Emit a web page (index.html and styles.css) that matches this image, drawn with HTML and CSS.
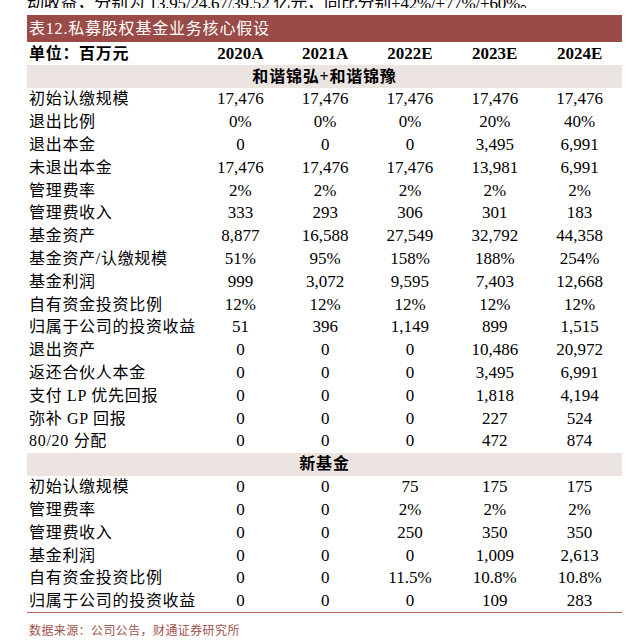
FILE: index.html
```html
<!DOCTYPE html>
<html lang="zh">
<head>
<meta charset="utf-8">
<link rel="stylesheet" href="styles.css">
</head>
<body>
<div class="page">
  <div class="cut"><p class="cut-text">动收益，分别为 13.95/24.67/39.52 亿元，同比分别+42%/+77%/+60%。</p></div>
  <div class="title">表12.私募股权基金业务核心假设</div>
  <table class="tbl">
    <colgroup><col class="c-label"><col><col><col><col><col></colgroup>
    <thead>
      <tr class="head"><th class="lab">单位：百万元</th><th>2020A</th><th>2021A</th><th>2022E</th><th>2023E</th><th>2024E</th></tr>
    </thead>
    <tbody>
      <tr class="band"><td colspan="6">和谐锦弘+和谐锦豫</td></tr>
      <tr><td class="lab">初始认缴规模</td><td>17,476</td><td>17,476</td><td>17,476</td><td>17,476</td><td>17,476</td></tr>
      <tr><td class="lab">退出比例</td><td>0%</td><td>0%</td><td>0%</td><td>20%</td><td>40%</td></tr>
      <tr><td class="lab">退出本金</td><td>0</td><td>0</td><td>0</td><td>3,495</td><td>6,991</td></tr>
      <tr><td class="lab">未退出本金</td><td>17,476</td><td>17,476</td><td>17,476</td><td>13,981</td><td>6,991</td></tr>
      <tr><td class="lab">管理费率</td><td>2%</td><td>2%</td><td>2%</td><td>2%</td><td>2%</td></tr>
      <tr><td class="lab">管理费收入</td><td>333</td><td>293</td><td>306</td><td>301</td><td>183</td></tr>
      <tr><td class="lab">基金资产</td><td>8,877</td><td>16,588</td><td>27,549</td><td>32,792</td><td>44,358</td></tr>
      <tr><td class="lab">基金资产/认缴规模</td><td>51%</td><td>95%</td><td>158%</td><td>188%</td><td>254%</td></tr>
      <tr><td class="lab">基金利润</td><td>999</td><td>3,072</td><td>9,595</td><td>7,403</td><td>12,668</td></tr>
      <tr><td class="lab">自有资金投资比例</td><td>12%</td><td>12%</td><td>12%</td><td>12%</td><td>12%</td></tr>
      <tr><td class="lab">归属于公司的投资收益</td><td>51</td><td>396</td><td>1,149</td><td>899</td><td>1,515</td></tr>
      <tr><td class="lab">退出资产</td><td>0</td><td>0</td><td>0</td><td>10,486</td><td>20,972</td></tr>
      <tr><td class="lab">返还合伙人本金</td><td>0</td><td>0</td><td>0</td><td>3,495</td><td>6,991</td></tr>
      <tr><td class="lab">支付 LP 优先回报</td><td>0</td><td>0</td><td>0</td><td>1,818</td><td>4,194</td></tr>
      <tr><td class="lab">弥补 GP 回报</td><td>0</td><td>0</td><td>0</td><td>227</td><td>524</td></tr>
      <tr><td class="lab">80/20 分配</td><td>0</td><td>0</td><td>0</td><td>472</td><td>874</td></tr>
      <tr class="band"><td colspan="6">新基金</td></tr>
      <tr><td class="lab">初始认缴规模</td><td>0</td><td>0</td><td>75</td><td>175</td><td>175</td></tr>
      <tr><td class="lab">管理费率</td><td>0</td><td>0</td><td>2%</td><td>2%</td><td>2%</td></tr>
      <tr><td class="lab">管理费收入</td><td>0</td><td>0</td><td>250</td><td>350</td><td>350</td></tr>
      <tr><td class="lab">基金利润</td><td>0</td><td>0</td><td>0</td><td>1,009</td><td>2,613</td></tr>
      <tr><td class="lab">自有资金投资比例</td><td>0</td><td>0</td><td>11.5%</td><td>10.8%</td><td>10.8%</td></tr>
      <tr class="last"><td class="lab">归属于公司的投资收益</td><td>0</td><td>0</td><td>0</td><td>109</td><td>283</td></tr>
    </tbody>
  </table>
  <div class="source">数据来源：公司公告，财通证券研究所</div>
</div>
</body>
</html>
```

FILE: styles.css
```css
* { box-sizing: border-box; }
html, body { margin: 0; padding: 0; background: #fff; }
body {
  font-family: "Liberation Serif", "Noto Sans CJK SC", serif;
  color: #000;
}
.page {
  width: 632px;
  padding-left: 27px;
  padding-right: 10px;
}
.cut {
  height: 8px;
  overflow: hidden;
  display: flex;
  align-items: flex-end;
}
.cut-text {
  margin: 0;
  font-size: 17px;
  line-height: 20px;
  white-space: nowrap;
  letter-spacing: -0.2px;
  color: #000;
  transform: translateY(6px);
}
.title {
  margin-top: 7px;
  height: 27px;
  background: #9a4b48;
  color: #fff;
  font-size: 16px;
  line-height: 27px;
  padding-left: 2px;
  letter-spacing: 0.8px;
}
.tbl {
  width: 595px;
  border-collapse: collapse;
  table-layout: fixed;
  border-bottom: 1px solid #a9605c;
}
.c-label { width: 171px; }
.tbl th, .tbl td {
  padding: 0;
  text-align: center;
  font-size: 17px;
  font-weight: normal;
  white-space: nowrap;
  height: 22.8px;
  line-height: 22px;
}
.tbl .lab {
  text-align: left;
  padding-left: 2px;
  font-size: 16px;
  letter-spacing: 0.7px;
}
.head th {
  font-weight: bold;
  height: 23px;
}
.head th.lab { font-weight: bold; }
.band td {
  background: #ebe4e0;
  font-weight: bold;
  font-size: 16px;
  letter-spacing: 0.8px;
  height: 23px;
}
.source {
  margin-top: 8px;
  font-size: 12px;
  color: #a2524e;
  letter-spacing: 0.4px;
  padding-left: 2px;
}
```
